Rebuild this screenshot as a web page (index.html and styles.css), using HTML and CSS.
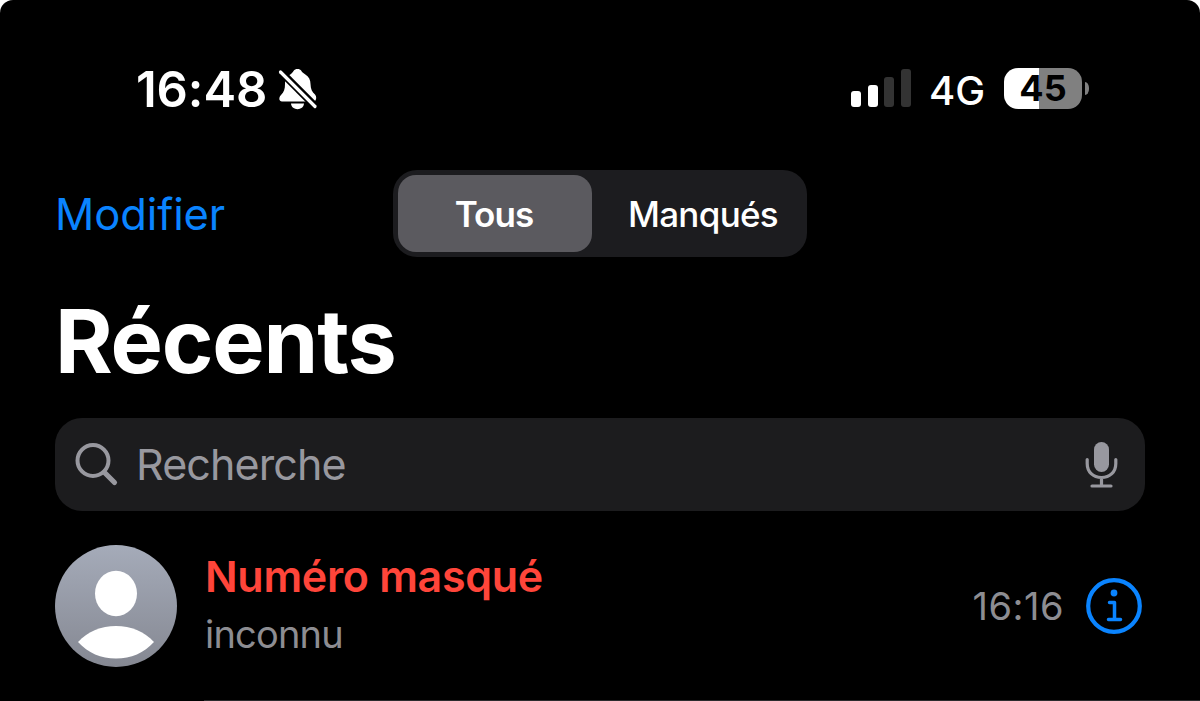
FILE: index.html
```html
<!DOCTYPE html>
<html lang="fr">

<head>
  <meta charset="utf-8">
  <title>Récents</title>
  <link rel="stylesheet" href="styles.css">
</head>

<body>
  <div class="phone">
    <div class="status-bar">
      <span class="status-time">16:48</span>
      <svg class="icon-silent" width="40" height="44" viewBox="0 0 40 44">
        <path fill="#fff" d="M13 8C14.500 6.800 15 6 15.700 4.800C17 2.500 22 2.500 23.300 4.800C24 6.300 25 7 27 8.200C31 10.800 32.500 14 32.500 18C32.700 23 34 26 37 28.500C39 30.500 38.500 35.500 35.500 35.500H4C0.800 35.500 0.500 31.500 3 29C6 26 7 23 7 18C7 14 8.500 10.500 13 8Z" />
        <path fill="#fff" d="M13 37.500H26C25.500 45 13.500 45 13 37.500Z" />
        <path stroke="#000" stroke-width="7.500" d="M-1 2L39 42" />
        <path stroke="#fff" stroke-width="3.200" stroke-linecap="round" d="M2.500 6L37 40.500" />
      </svg>
      <div class="signal">
        <span class="bar bar-1"></span>
        <span class="bar bar-2"></span>
        <span class="bar bar-3 off"></span>
        <span class="bar bar-4 off"></span>
      </div>
      <span class="network">4G</span>
      <div class="battery"><span>45</span></div>
      <div class="battery-cap"></div>
    </div>

    <div class="nav-bar">
      <a class="edit">Modifier</a>
      <div class="segmented">
        <div class="segment active"><span>Tous</span></div>
        <div class="segment"><span>Manqués</span></div>
      </div>
    </div>

    <h1 class="title">Récents</h1>

    <div class="search">
      <svg width="44" height="46" viewBox="0 0 44 46" fill="none" stroke="#98989f">
        <circle cx="18" cy="18.500" r="15.500" stroke-width="4" />
        <path d="M29.500 30.500L39.500 40.500" stroke-width="5.200" stroke-linecap="round" />
      </svg>
      <span class="search-text">Recherche</span>
      <svg class="icon-mic" width="34" height="50" viewBox="0 0 34 50" fill="none" stroke="#98989f" stroke-width="3.200" stroke-linecap="round">
        <rect x="9" y="2" width="15" height="30" rx="7.500" fill="#98989f" stroke="none" />
        <path d="M2.200 19.500V23.500C2.200 32 8 37.500 16.500 37.500S30.800 32 30.800 23.500V19.500M16.500 38V46M7 46H26" />
      </svg>
    </div>

    <div class="call">
      <svg class="avatar" width="122" height="122" viewBox="0 0 122 122">
        <defs>
          <linearGradient id="avatar-bg" x1="0" y1="0" x2="0" y2="1">
            <stop offset="0" stop-color="#a5abb9" />
            <stop offset="1" stop-color="#858892" />
          </linearGradient>
        </defs>
        <circle cx="61" cy="61" r="61" fill="url(#avatar-bg)" />
        <ellipse cx="61" cy="48.500" rx="21" ry="22.800" fill="#fff" />
        <path fill="#fff" d="M23 97C33 86.500 46 81 61 81S89 86.500 99 97C89 108 76 113.500 61 113.500S33 108 23 97Z" />
      </svg>
      <div class="call-body">
        <div class="call-text">
          <div class="call-name">Numéro masqué</div>
          <div class="call-label">inconnu</div>
        </div>
        <span class="call-time">16:16</span>
        <svg class="icon-info" width="56" height="56" viewBox="0 0 56 56" fill="none" stroke="#0a84ff" stroke-linecap="round" stroke-linejoin="round">
          <circle cx="28" cy="28" r="25.800" stroke-width="4.200" />
          <circle cx="28" cy="15" r="3.400" fill="#0a84ff" stroke="none" />
          <path d="M23.500 24.500H28.500V41.500M22.500 41.500H34.500" stroke-width="3.500" />
        </svg>
      </div>
    </div>
  </div>
</body>
</html>
```

FILE: styles.css
```css
html, body { padding: 0; margin: 0; background: #fff; }

* { box-sizing: border-box; }

.phone {
  height: 701px;
  overflow: hidden;
  background: #000;
  border-radius: 13px 13px 0 0;
  color: #fff;
  font-family: Inter, "Liberation Sans", sans-serif;
  white-space: nowrap;
}

svg {
  display: block;
  flex: none;
}

.status-bar {
  display: flex;
  align-items: center;
  height: 110px;
  padding: 66px 111px 0 136px;
}

.status-time {
  width: 142px;
  padding-top: 3px;
  font-size: 49px;
  font-weight: 600;
  line-height: 48px;
  letter-spacing: -0.1px;
}

.signal {
  display: flex;
  align-items: flex-end;
  gap: 6.300px;
  height: 38px;
  margin-left: auto;
}

.bar {
  width: 10.300px;
  border-radius: 3px;
  background: #fff;
}

.bar.off { background: #333; }

.bar-1 { height: 16px; }
.bar-2 { height: 22px; }
.bar-3 { height: 30px; }
.bar-4 { height: 38px; }

.network {
  width: 75px;
  margin-left: 18px;
  padding-top: 5px;
  font-size: 40px;
  font-weight: 450;
  line-height: 44px;
}

.battery {
  width: 78px;
  height: 41px;
  border-radius: 14px;
  background: linear-gradient(90deg, #fff 35px, #808080 35px);
  color: #000;
  font-size: 36px;
  font-weight: 700;
  line-height: 41px;
  text-align: center;
}

.battery-cap {
  width: 4px;
  height: 13px;
  margin-left: 3px;
  border-radius: 0 4px 4px 0 / 0 6px 6px 0;
  background: #808080;
}

.nav-bar {
  display: grid;
  grid-template-columns: 338px 414px;
  align-items: center;
  padding: 60px 0 0 55px;
}

.edit {
  color: #0a84ff;
  font-size: 43.500px;
  line-height: 87px;
  padding-top: 1px;
  margin-bottom: -1px;
  letter-spacing: -0.1px;
}

.segmented {
  display: grid;
  grid-template-columns: 194px 1fr;
  height: 87px;
  padding: 5px;
  border-radius: 24px;
  background: #1c1c1f;
}

.segment {
  height: 77px;
  padding-left: 12px;
  border-radius: 18px;
  font-size: 35px;
  font-weight: 450;
  line-height: 79px;
  letter-spacing: -0.7px;
  text-align: center;
}

.segment.active {
  padding: 0 2px 0 0;
  background: #5b5a5f;
  font-weight: 600;
  letter-spacing: -0.9px;
}

.title {
  margin: 31px 0 0 55px;
  font-size: 88px;
  font-weight: 700;
  line-height: 106px;
  letter-spacing: -1.200px;
}

.search {
  display: flex;
  align-items: center;
  height: 93px;
  margin: 24px 55px 0;
  padding: 0 26px 0 20px;
  border-radius: 27px;
  background: #1c1c1e;
}

.search-text {
  flex: 1;
  margin-left: 17px;
  color: #98989f;
  font-size: 43px;
  line-height: 93px;
  letter-spacing: -0.9px;
}

.call {
  display: flex;
  height: 190px;
  padding-left: 55px;
}

.avatar {
  margin-top: 34px;
}

.call-body {
  display: flex;
  flex: 1;
  align-items: center;
  margin-left: 27px;
  padding-right: 58px;
  border-bottom: 1px solid #2b2b2d;
}

.call-text {
  flex: 1;
  padding: 0 0 2px 1px;
}

.call-name {
  color: #ff453a;
  font-size: 43px;
  font-weight: 600;
  line-height: 60px;
  letter-spacing: -0.3px;
}

.call-label {
  color: #8d8d92;
  font-size: 38px;
  line-height: 57px;
  letter-spacing: -0.8px;
}

.call-time {
  margin-right: 22px;
  padding-top: 1px;
  color: #8d8d92;
  font-size: 38px;
  letter-spacing: 0.5px;
}
```
